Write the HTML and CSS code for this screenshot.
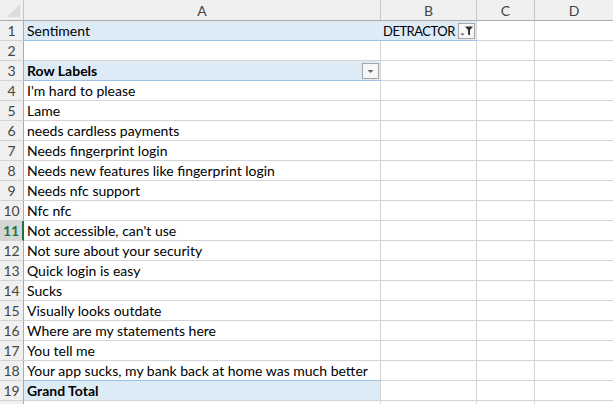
FILE: index.html
```html
<!DOCTYPE html>
<html>
<head>
<meta charset="utf-8">
<link rel="stylesheet" href="styles.css">
</head>
<body>
<div class="sheet">
  <div class="corner"><span class="tri"></span></div>
  <div class="ch">A</div>
  <div class="ch">B</div>
  <div class="ch">C</div>
  <div class="ch">D</div>

  <div class="rh">1</div>
  <div class="c blue bb nor">Sentiment</div>
  <div class="c blue bb detr"><span class="caps">DETRACTOR</span>
    <span class="btn"><svg width="15" height="14" viewBox="0 0 15 14"><path d="M1.5 9.5 h4 l-2 2 z" fill="#555"/><path d="M6 2.5 h8 l-3 3.5 v5.5 l-2 -1.2 v-4.3 z" fill="#333"/></svg></span></div>
  <div class="c"></div><div class="c"></div>

  <div class="rh">2</div>
  <div class="c"></div><div class="c"></div><div class="c"></div><div class="c"></div>

  <div class="rh">3</div>
  <div class="c blue bb b lbl"><span>Row Labels</span>
    <span class="btn"><svg width="15" height="14" viewBox="0 0 15 14"><path d="M4.5 6 h6 l-3 3 z" fill="#666"/></svg></span></div>
  <div class="c"></div><div class="c"></div><div class="c"></div>

  <div class="rh">4</div><div class="c">I'm hard to please</div><div class="c"></div><div class="c"></div><div class="c"></div>
  <div class="rh">5</div><div class="c">Lame</div><div class="c"></div><div class="c"></div><div class="c"></div>
  <div class="rh">6</div><div class="c">needs cardless payments</div><div class="c"></div><div class="c"></div><div class="c"></div>
  <div class="rh">7</div><div class="c">Needs fingerprint login</div><div class="c"></div><div class="c"></div><div class="c"></div>
  <div class="rh">8</div><div class="c">Needs new features like fingerprint login</div><div class="c"></div><div class="c"></div><div class="c"></div>
  <div class="rh">9</div><div class="c">Needs nfc support</div><div class="c"></div><div class="c"></div><div class="c"></div>
  <div class="rh">10</div><div class="c">Nfc nfc</div><div class="c"></div><div class="c"></div><div class="c"></div>
  <div class="rh sel">11</div><div class="c">Not accessible, can't use</div><div class="c"></div><div class="c"></div><div class="c"></div>
  <div class="rh">12</div><div class="c">Not sure about your security</div><div class="c"></div><div class="c"></div><div class="c"></div>
  <div class="rh">13</div><div class="c">Quick login is easy</div><div class="c"></div><div class="c"></div><div class="c"></div>
  <div class="rh">14</div><div class="c">Sucks</div><div class="c"></div><div class="c"></div><div class="c"></div>
  <div class="rh">15</div><div class="c">Visually looks outdate</div><div class="c"></div><div class="c"></div><div class="c"></div>
  <div class="rh">16</div><div class="c">Where are my statements here</div><div class="c"></div><div class="c"></div><div class="c"></div>
  <div class="rh">17</div><div class="c">You tell me</div><div class="c"></div><div class="c"></div><div class="c"></div>
  <div class="rh">18</div><div class="c bbl">Your app sucks, my bank back at home was much better</div><div class="c"></div><div class="c"></div><div class="c"></div>
  <div class="rh">19</div><div class="c blue b">Grand Total</div><div class="c"></div><div class="c"></div><div class="c"></div>
  <div class="rh"></div><div class="c"></div><div class="c"></div><div class="c"></div><div class="c"></div>
</div>
</body>
</html>
```

FILE: styles.css
```css
html, body {
  margin: 0;
  padding: 0;
  background: #fff;
  overflow: hidden;
}
.sheet {
  display: grid;
  grid-template-columns: 24px 357px 96px 58px 79px;
  grid-template-rows: 21px;
  grid-auto-rows: 20px;
  font-family: Lato, "Liberation Sans", sans-serif;
  font-size: 14px;
  color: #000;
}
.corner {
  background: #f0f0f0;
  border-right: 1px solid #c6c6c6;
  border-bottom: 1px solid #ababab;
  box-sizing: border-box;
  position: relative;
}
.tri {
  position: absolute;
  right: 3px;
  bottom: 3px;
  width: 0;
  height: 0;
  border-left: 13px solid transparent;
  border-bottom: 13px solid #dcdcdc;
}
.ch {
  background: #f0f0f0;
  border-right: 1px solid #c6c6c6;
  border-bottom: 1px solid #ababab;
  box-sizing: border-box;
  text-align: center;
  line-height: 21px;
  color: #444;
  font-size: 14px;
}
.rh {
  background: #f0f0f0;
  border-right: 1px solid #ababab;
  border-bottom: 1px solid #d4d4d4;
  box-sizing: border-box;
  text-align: center;
  line-height: 20px;
  color: #444;
  font-size: 14px;
}
.rh.sel {
  background: #d6d6d6;
  color: #217346;
  font-weight: bold;
  border-right: 2px solid #217346;
}
.c {
  border-right: 1px solid #d4d4d4;
  border-bottom: 1px solid #d4d4d4;
  box-sizing: border-box;
  padding: 0 0 0 3px;
  line-height: 20px;
  white-space: nowrap;
  overflow: visible;
}
.c.blue {
  background: #ddebf7;
}
.c.bb {
  border-bottom: 1px solid #9bc2e6;
}
.c.bbl {
  border-bottom: 1px solid #9bc2e6;
}
.c.nor {
  border-right: none;
}
.c.b {
  font-weight: bold;
}
.detr {
  padding-left: 2px;
}
.caps {
  font-size: 13px;
  letter-spacing: -0.5px;
}
.detr, .lbl {
  display: flex;
  justify-content: space-between;
  align-items: center;
  padding-right: 1px;
}
.btn {
  flex-shrink: 0;
  width: 17px;
  height: 16px;
  box-sizing: border-box;
  border: 1px solid #a6a6a6;
  background: #f7f7f7;
  display: flex;
  align-items: center;
  justify-content: center;
}
.btn svg {
  display: block;
}
```
